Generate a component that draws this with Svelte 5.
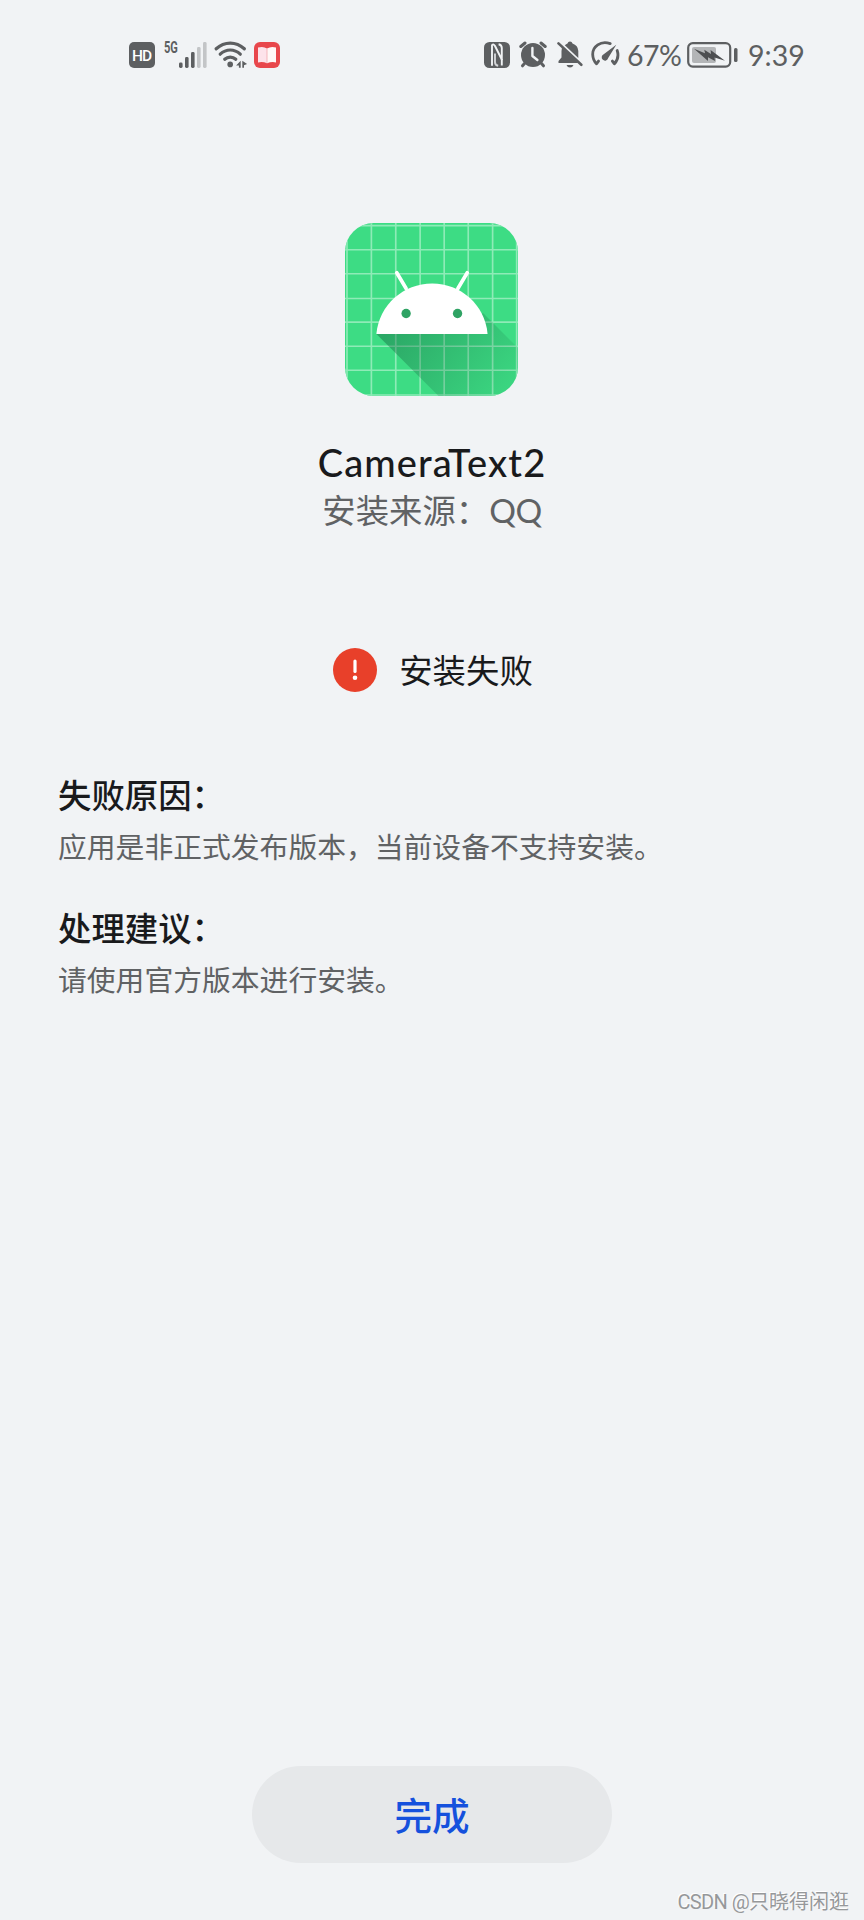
<script lang="ts">
  type Section = {
    title: string;
    body: string;
  };

  const app = { name: 'CameraText2', source: 'QQ' };

  const sections: Section[] = [
    { title: '失败原因：', body: '应用是非正式发布版本，当前设备不支持安装。' },
    { title: '处理建议：', body: '请使用官方版本进行安装。' },
  ];

  const gridX = [38, 111, 184, 257, 329, 401, 474, 546];
  const gridY = [38, 110, 182, 256, 327, 399, 471, 545];
  const signalBars = [5.5, 11, 16, 21, 26];
</script>

<div class="screen">
  <header class="status">
    <div class="status-group left">
      <svg class="hd" viewBox="0 0 26 26" width="26" height="26" aria-hidden="true">
        <rect width="26" height="26" rx="5" fill="#5d5f61" />
        <text x="13" y="18.8" text-anchor="middle" textLength="20" class="hd-text">HD</text>
      </svg>
      <span class="net-text">5G</span>
      <svg class="signal" viewBox="0 0 28 26" width="28" height="26" aria-hidden="true">
        {#each signalBars as h, i}
          <rect
            x={i * 6}
            y={26 - h}
            width="3.6"
            height={h}
            rx="1.4"
            fill={i < 3 ? '#5d5f61' : '#c3c5c7'}
          />
        {/each}
      </svg>
      <svg class="wifi" viewBox="0 0 34 27" width="34" height="27" aria-hidden="true">
        <g fill="none" stroke="#5d5f61" stroke-width="3.2" stroke-linecap="round">
          <path d="M2.2 7.8C10.5.2 22 .2 30.300 7.800" />
          <path d="M6.2 13.2c6-5.6 14.1-5.6 20.1 0" />
          <path d="M10.7 18.2c3.2-2.9 7.9-2.9 11.1 0" />
        </g>
        <circle cx="16.2" cy="23.4" r="2.8" fill="#5d5f61" />
        <path d="M26.7 19.8v7h-1.8v-2.3h-2.8zM28.3 19.8v7h1.7v-2.6l3.1-1.2z" fill="#5d5f61" />
      </svg>
      <svg class="book" viewBox="0 0 26 26" width="26" height="26" aria-hidden="true">
        <rect width="26" height="26" rx="6" fill="#e8474c" />
        <path d="M4 5.5Q9.5 4 13 6.5v14.7Q9 19.5 4 20.400z" fill="#fde3ea" />
        <path d="M13 6.5Q17 4 22 5.5v14.9Q17.5 19.500 13 21.200z" fill="#fff8f7" />
        <path d="M13 6.5v14.7" stroke="#f1a7ad" stroke-width="0.8" />
      </svg>
    </div>

    <div class="status-group right">
      <svg class="nfc" viewBox="0 0 26 26" width="26" height="26" aria-hidden="true">
        <rect width="26" height="26" rx="5.5" fill="#5d5f61" />
        <g fill="none" stroke="#f1f3f5" stroke-width="1.9" stroke-linejoin="round">
          <path d="M8 23.800V3.200Q9.800 1.600 11 4L17.800 17.500V6Q17.800 2.800 14.600 2.200" />
          <path d="M11 11.500V20Q11 23.200 14.200 23.800" opacity="0.8" />
          <path d="M17.800 17v6.500" />
        </g>
      </svg>
      <svg class="alarm" viewBox="0 0 28 27" width="28" height="27" aria-hidden="true">
        <circle cx="14" cy="14" r="12" fill="#5d5f61" />
        <g fill="none" stroke="#5d5f61" stroke-width="3" stroke-linecap="round">
          <path d="M1.8 5.5L6 2M26.2 5.5L22 2" />
          <path d="M5.5 22.5L3.5 24.8M22.5 22.5l2 2.3" />
        </g>
        <path
          d="M13.4 7v8l5 4"
          fill="none"
          stroke="#f1f3f5"
          stroke-width="2.4"
          stroke-linecap="round"
          stroke-linejoin="round"
        />
      </svg>
      <svg class="bell" viewBox="0 0 26 27" width="26" height="27" aria-hidden="true">
        <path
          d="M7.8 4.2Q9.2 3 10.500 2.500Q11 .4 13 .4t2.500 2.100Q21 4.300 21.300 10v6.900z"
          fill="#5d5f61"
        />
        <path d="M5 6.500L21 21.500V22H1.500v-2L4.500 16.500V10z" fill="#5d5f61" />
        <path d="M9.500 24h7Q15.500 26.500 13 26.500T9.500 24z" fill="#5d5f61" />
        <path d="M1.500 2.400L24.300 23.800" stroke="#5d5f61" stroke-width="2.600" stroke-linecap="round" />
      </svg>
      <svg class="gauge" viewBox="0 0 29 27" width="29" height="27" aria-hidden="true">
        <g fill="none" stroke="#5d5f61" stroke-width="2.8" stroke-linecap="round" stroke-linejoin="round">
          <path d="M19.2 2.6C9.5-.8 1.5 5.8 1.7 13.5c.1 3.800 1.300 6.700 3.800 9.300l2-2.700" />
          <path d="M26.2 9.500c1.600 5 .5 9.700-2.800 13.300l-2-2.700" />
        </g>
        <path d="M25.3 3.700L17.200 17.100a3.300 3.300 0 1 1-4.500-3.800z" fill="#5d5f61" />
      </svg>
      <span class="percent">67%</span>
      <svg class="battery" viewBox="0 0 51 26" width="51" height="26" aria-hidden="true">
        <rect x="1.2" y="1.2" width="42" height="23.4" rx="4.5" fill="none" stroke="#5d5f61" stroke-width="2.2" />
        <rect x="5" y="5" width="24" height="16" rx="2" fill="#b3b5b7" />
        <path
          d="M7 6.8L18 11.200 17.300 7.800 24 12 23.600 8 38 18.800 27.500 15.500 28 19 21 15.200 21 19z"
          fill="#4d4f51"
        />
        <rect x="47" y="6" width="3.5" height="14" rx="1.5" fill="#5d5f61" />
      </svg>
      <span class="time">9:39</span>
    </div>
  </header>

  <main>
    <svg class="app-icon" viewBox="32 30 518 518" width="173" height="173" aria-label={app.name}>
      <defs>
        <clipPath id="tile">
          <rect x="32" y="30" width="518" height="518" rx="86" />
        </clipPath>
        <linearGradient id="shade" gradientUnits="userSpaceOnUse" x1="200" y1="310" x2="490" y2="550">
          <stop offset="0" stop-color="#156640" stop-opacity="0.44" />
          <stop offset="1" stop-color="#156640" stop-opacity="0.06" />
        </linearGradient>
      </defs>
      <g clip-path="url(#tile)">
        <rect x="32" y="30" width="518" height="518" fill="#3ddc84" />
        <g stroke="#8eebb7" stroke-width="5">
          {#each gridX as x}
            <line x1={x} y1="30" x2={x} y2="548" />
          {/each}
          {#each gridY as y}
            <line x1="32" y1={y} x2="550" y2={y} />
          {/each}
        </g>
        <path d="M126 362L312 548H550V404L446 300z" fill="url(#shade)" />
        <path d="M187 179l28 47M398 179l-28 47" stroke="#fff" stroke-width="11" stroke-linecap="round" />
        <path d="M126 362C134 275 207 211 293 211S451 275 459 362z" fill="#fff" />
        <circle cx="215" cy="301" r="14" fill="#2fa364" />
        <circle cx="369" cy="301" r="14" fill="#2fa364" />
      </g>
    </svg>

    <h1>{app.name}</h1>
    <p class="source">安装来源：<span>{app.source}</span></p>

    <div class="result">
      <svg viewBox="0 0 44 44" width="44" height="44" aria-hidden="true">
        <circle cx="22" cy="22" r="22" fill="#e8402a" />
        <path d="M22 13v10.500" stroke="#fff" stroke-width="3.2" stroke-linecap="round" />
        <circle cx="22" cy="29.8" r="2.3" fill="#fff" />
      </svg>
      <span>安装失败</span>
    </div>

    <div class="details">
      {#each sections as section}
        <section>
          <h2>{section.title}</h2>
          <p>{section.body}</p>
        </section>
      {/each}
    </div>
  </main>

  <footer>
    <button type="button">完成</button>
    <small><span>CSDN @</span>只晓得闲逛</small>
  </footer>
</div>

<style>
  :global(body) {
    background: #f1f3f5;
  }
  .screen {
    box-sizing: border-box;
    width: 864px;
    height: 1920px;
    display: flex;
    flex-direction: column;
    overflow: hidden;
    background: #f1f3f5;
    color: #191a1c;
    font-family: Lato, 'Noto Sans CJK SC', sans-serif;
  }
  h1,
  h2,
  p {
    margin: 0;
  }
  svg {
    display: block;
    flex: none;
  }

  .status {
    height: 110px;
    box-sizing: border-box;
    padding: 41px 59px 0 129px;
    display: flex;
    justify-content: space-between;
    align-items: flex-start;
    color: #5d5f61;
  }
  .status-group {
    display: flex;
    align-items: center;
    height: 27px;
  }
  .hd-text {
    font: 500 15.5px Roboto, sans-serif;
    fill: #fff;
  }
  .net-text {
    align-self: flex-start;
    width: 20px;
    margin: -3px -5px 0 9px;
    font: 700 17px/18px Roboto, sans-serif;
    transform: scaleX(0.65);
    transform-origin: left;
  }
  .wifi {
    margin-left: 7px;
  }
  .book {
    margin-left: 6px;
  }
  .alarm {
    margin-left: 9px;
  }
  .bell {
    margin-left: 10px;
  }
  .gauge {
    margin-left: 8px;
  }
  .percent,
  .time {
    font-size: 28.5px;
    line-height: 27px;
    padding-top: 2px;
    white-space: nowrap;
  }
  .percent {
    width: 55px;
    margin-left: 7px;
    letter-spacing: -0.5px;
  }
  .battery {
    margin-left: 5px;
  }
  .time {
    width: 57px;
    margin-left: 10px;
  }

  main {
    flex: 1;
    display: flex;
    flex-direction: column;
    align-items: center;
    padding-top: 113px;
  }
  .app-icon {
    margin-right: 1px;
  }
  h1 {
    margin-top: 43px;
    font-size: 38px;
    line-height: 46px;
    font-weight: 500;
    letter-spacing: 1.1px;
  }
  .source {
    margin-top: 1px;
    font-size: 33.4px;
    line-height: 48px;
    color: #606264;
  }
  .source span {
    letter-spacing: -0.5px;
  }
  .result {
    margin: 114px 0 0 2px;
    height: 92px;
    display: flex;
    gap: 22px;
    font-size: 33.4px;
    line-height: 44px;
  }
  .details {
    align-self: stretch;
    padding: 30px 58px 0;
    display: flex;
    flex-direction: column;
    gap: 34px;
  }
  h2 {
    font-size: 33.4px;
    line-height: 50px;
    font-weight: 500;
  }
  section p {
    margin-top: 5px;
    font-size: 28.8px;
    line-height: 44px;
    color: #606264;
  }

  footer {
    display: flex;
    flex-direction: column;
    align-items: center;
  }
  button {
    width: 360px;
    height: 97px;
    padding: 0 0 3px;
    border: 0;
    border-radius: 49px;
    background: #e6e8ea;
    color: #1551dd;
    font: 500 37.6px Lato, 'Noto Sans CJK SC', sans-serif;
  }
  small {
    align-self: flex-end;
    margin: 25px 15px 4px 0;
    font: 20px/28px Roboto, 'Noto Sans CJK SC', sans-serif;
    color: #96989a;
    text-shadow: -1px -1px 0 #fff;
  }
  small span {
    letter-spacing: -0.6px;
  }
</style>
